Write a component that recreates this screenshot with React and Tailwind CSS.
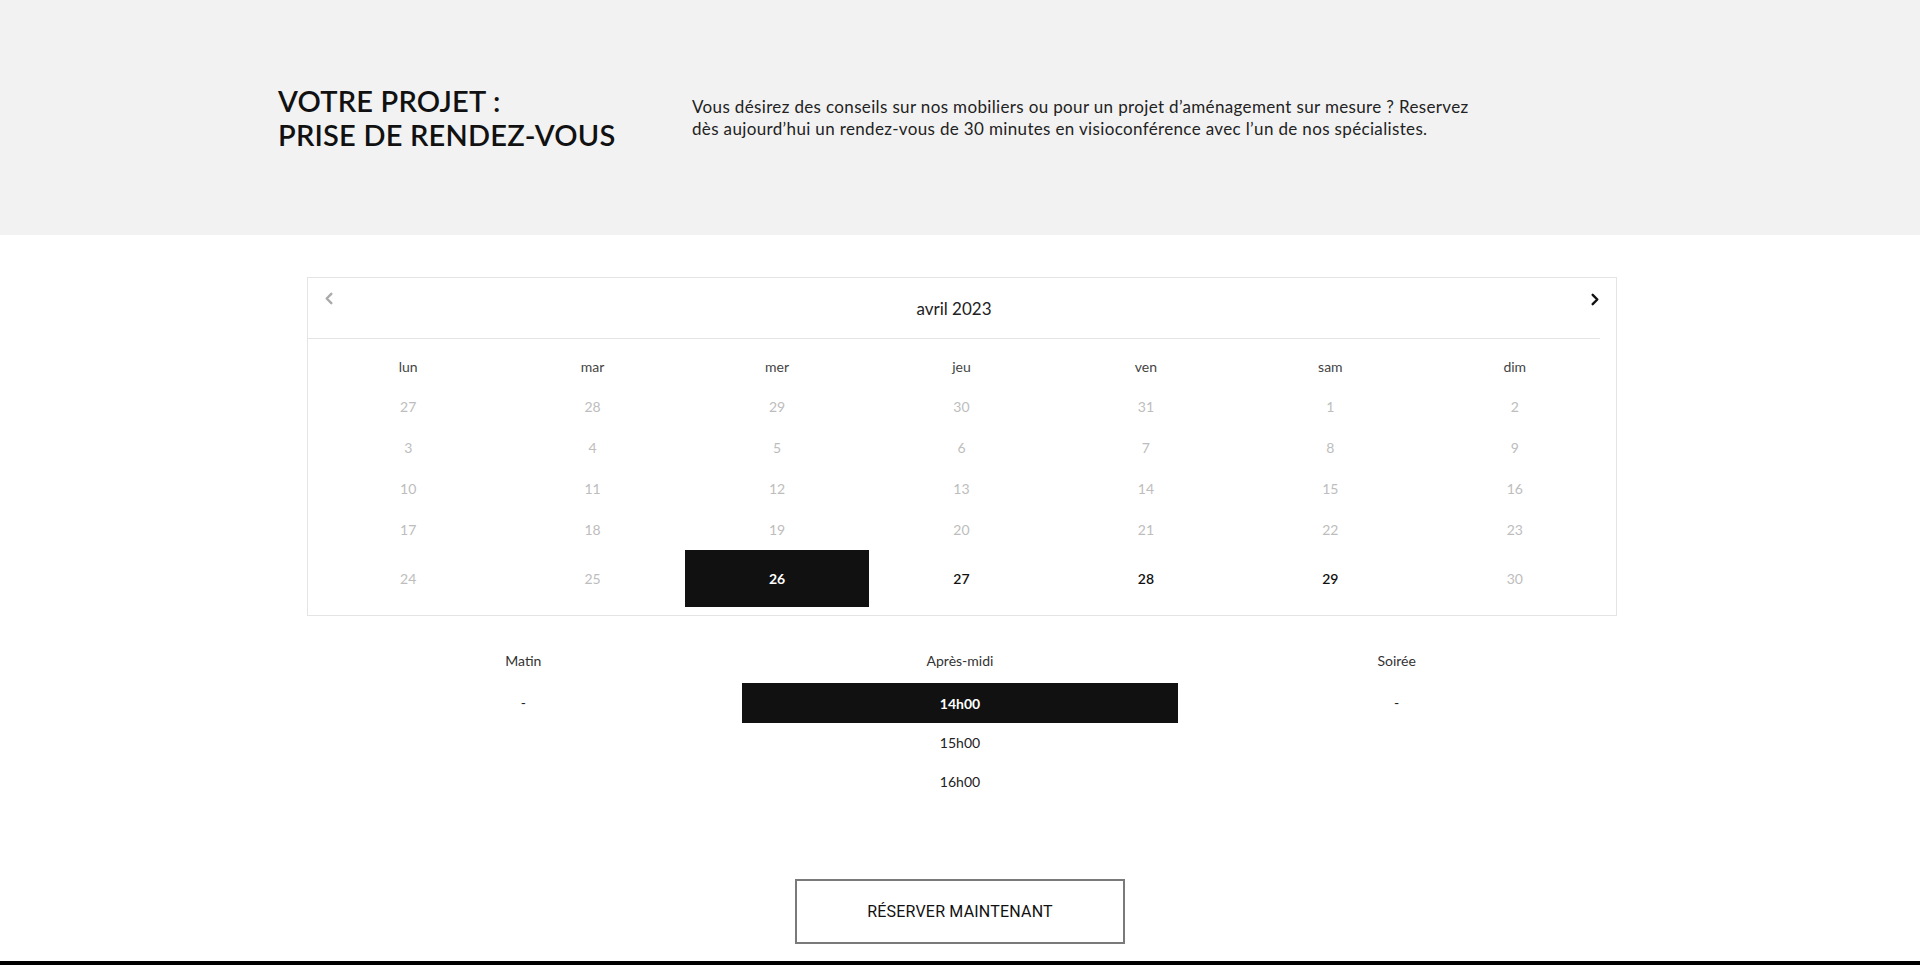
import React from 'react';

const weekDays = ['lun', 'mar', 'mer', 'jeu', 'ven', 'sam', 'dim'];

const weeks = [
  [27, 28, 29, 30, 31, 1, 2],
  [3, 4, 5, 6, 7, 8, 9],
  [10, 11, 12, 13, 14, 15, 16],
  [17, 18, 19, 20, 21, 22, 23],
];

const lastWeek = [
  { d: 24, state: 'off' },
  { d: 25, state: 'off' },
  { d: 26, state: 'selected' },
  { d: 27, state: 'open' },
  { d: 28, state: 'open' },
  { d: 29, state: 'open' },
  { d: 30, state: 'off' },
];

const slots = [
  { name: 'Matin', times: ['-'] },
  { name: 'Après-midi', times: ['14h00', '15h00', '16h00'], selected: '14h00' },
  { name: 'Soirée', times: ['-'] },
];

const Chevron = ({ dir, className }) => (
  <svg viewBox="0 0 10 14" className={className} fill="none" stroke="currentColor" strokeWidth="2.6" strokeLinecap="round" strokeLinejoin="round">
    {dir === 'left' ? <path d="M7.5 2 L2.5 7 L7.5 12" /> : <path d="M2.5 2 L7.5 7 L2.5 12" />}
  </svg>
);

export default function App() {
  return (
    <div className="min-h-screen bg-white font-['Lato',sans-serif] text-[#111]">
      <header className="h-[235px] bg-[#f2f2f2] flex items-center pl-[278px]">
        <h1 className="w-[414px] text-[29px] leading-[34px] font-semibold uppercase tracking-[0.2px] text-[#111]">
          Votre projet :<br />Prise de rendez-vous
        </h1>
        <p className="w-[800px] text-[17px] leading-[22px] tracking-[0.35px] text-[#222]">
          Vous désirez des conseils sur nos mobiliers ou pour un projet d’aménagement sur mesure ? Reservez dès aujourd’hui un rendez-vous de 30 minutes en visioconférence avec l’un de nos spécialistes.
        </p>
      </header>

      <section className="ml-[307px] mt-[42px] w-[1310px] border border-[#e4e4e4] pb-[8px]">
        <div className="mr-[16px] flex h-[61px] items-center justify-between border-b border-[#e4e4e4] relative">
          <button className="absolute left-[16px] top-[14px] text-[#aaa]">
            <Chevron dir="left" className="w-[10px] h-[13px]" />
          </button>
          <div className="flex-1 text-center text-[17px] text-[#222] pt-[2px]">avril 2023</div>
          <button className="absolute right-[0px] top-[15px] text-[#111]">
            <Chevron dir="right" className="w-[10px] h-[13px]" />
          </button>
        </div>

        <div className="pl-[8px] pr-[9px] mt-[7px]">
          <div className="grid grid-cols-7 h-[40px] items-center text-center text-[14px] text-[#444]">
            {weekDays.map(d => (
              <div key={d}>{d}</div>
            ))}
          </div>
          {weeks.map((w, i) => (
            <div key={i} className="grid grid-cols-7 h-[41px] items-center text-center text-[14px] text-[#bdbdbd]">
              {w.map(d => (
                <div key={d}>{d}</div>
              ))}
            </div>
          ))}
          <div className="grid grid-cols-7 h-[57px] text-center text-[14px]">
            {lastWeek.map(c => (
              <div
                key={c.d}
                className={`flex items-center justify-center ${
                  c.state === 'selected'
                    ? 'bg-[#111] text-white font-bold'
                    : c.state === 'open'
                    ? 'text-[#111] font-semibold'
                    : 'text-[#bdbdbd]'
                }`}
              >
                {c.d}
              </div>
            ))}
          </div>
        </div>
      </section>

      <section className="ml-[305px] mt-[29px] w-[1310px] grid grid-cols-3">
        {slots.map(s => (
          <div key={s.name} className="flex flex-col items-stretch">
            <div className="h-[30px] mb-[8px] flex items-center justify-center text-[14px] text-[#333]">{s.name}</div>
            {s.times.map(t => (
              <div
                key={t}
                className={`flex items-center justify-center text-[14px] ${
                  s.selected === t ? 'h-[40px] bg-[#111] text-white font-bold' : 'h-[39px] text-[#222]'
                }`}
              >
                {t}
              </div>
            ))}
          </div>
        ))}
      </section>

      <div className="flex justify-center mt-[78px]">
        <button className="w-[330px] h-[65px] border-2 border-[#7a7a7a] bg-white font-['Roboto',sans-serif] text-[16px] text-[#111] tracking-[0.2px]">
          RÉSERVER MAINTENANT
        </button>
      </div>

      <footer className="mt-[17px] h-[40px] bg-black"></footer>
    </div>
  );
}
